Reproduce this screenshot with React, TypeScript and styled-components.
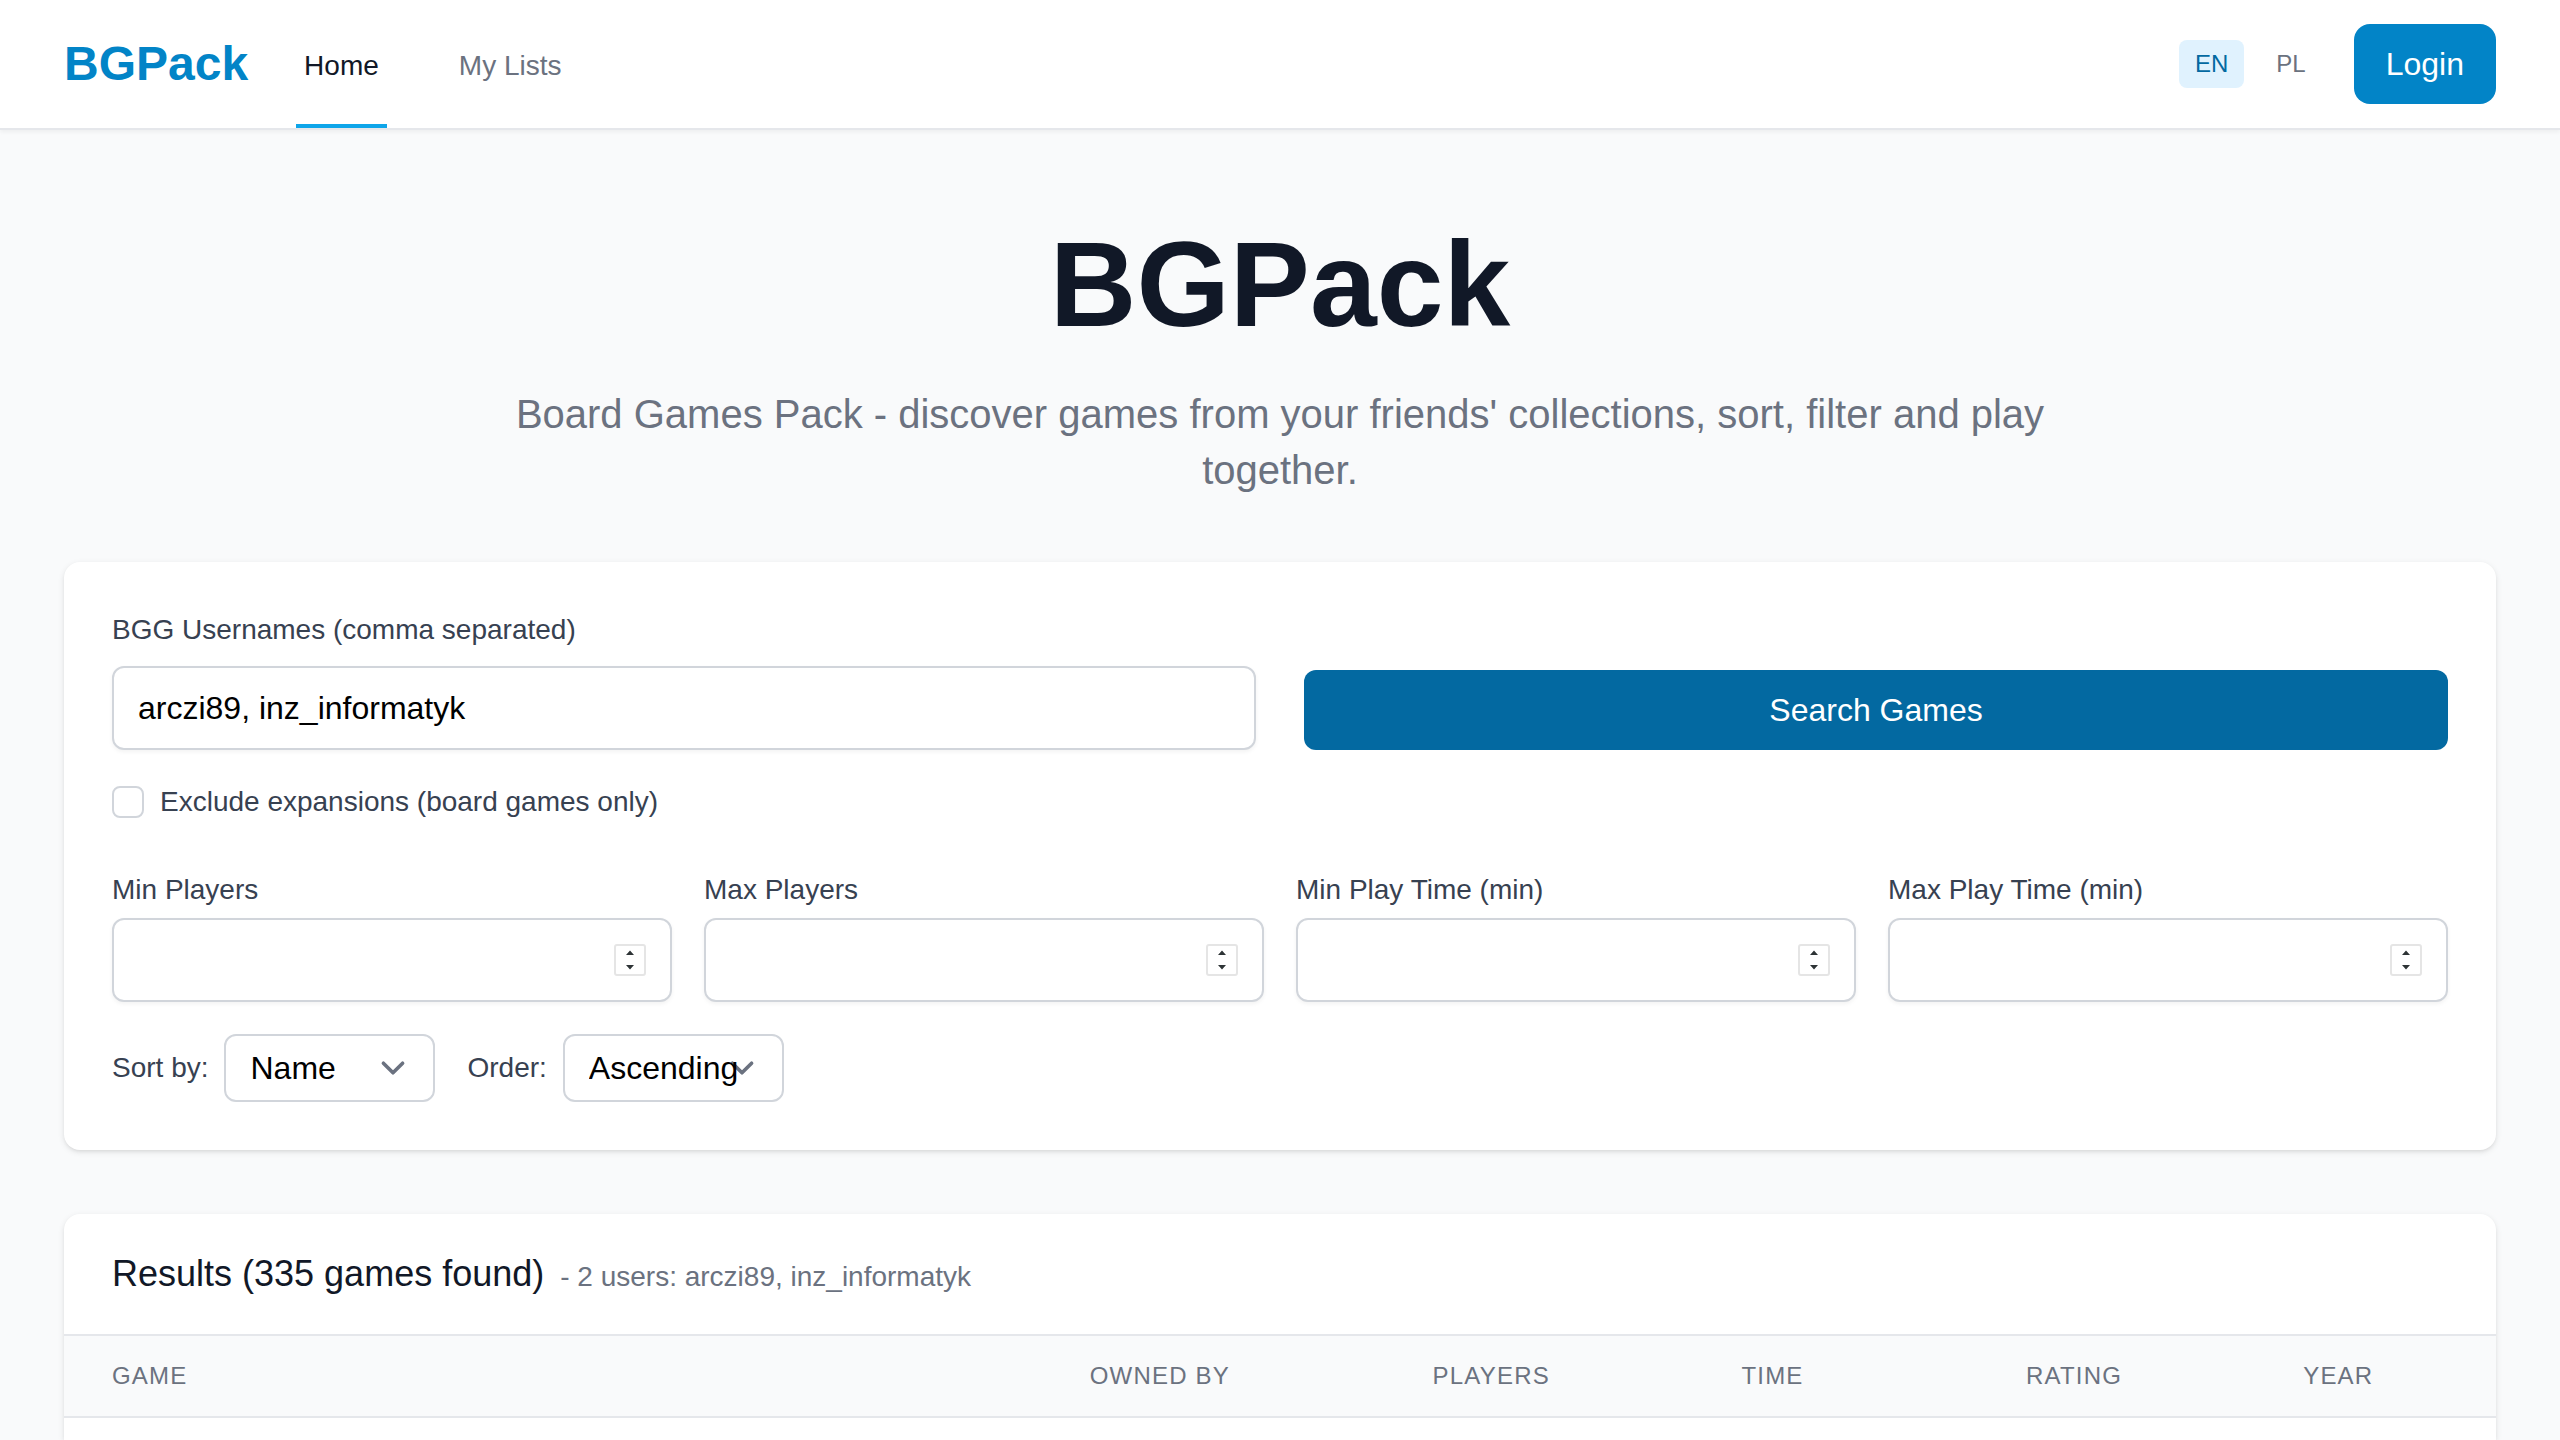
import React, { useState } from "react";
import styled, { createGlobalStyle } from "styled-components";

const sky = { 500: "#0ea5e9", 600: "#0284c7", 700: "#0369a1", 100: "#e0f2fe" };
const gray = {
  50: "#f9fafb",
  200: "#e5e7eb",
  300: "#d1d5db",
  500: "#6b7280",
  700: "#374151",
  900: "#111827",
};
const cardShadow =
  "0 2px 6px rgba(0, 0, 0, 0.1), 0 2px 4px -2px rgba(0, 0, 0, 0.1)";
const fieldShadow = "0 2px 4px rgba(0, 0, 0, 0.05)";

const svgUrl = (body: string) => `url("data:image/svg+xml,${encodeURIComponent(body)}")`;

const chevron = svgUrl(
  `<svg xmlns="http://www.w3.org/2000/svg" fill="none" viewBox="0 0 20 20"><path stroke="#6b7280" stroke-linecap="round" stroke-linejoin="round" stroke-width="1.5" d="M6 8l4 4 4-4"/></svg>`
);
const stepper = svgUrl(
  `<svg xmlns="http://www.w3.org/2000/svg" width="32" height="32" viewBox="0 0 32 32"><rect x="1" y="1" width="30" height="30" rx="2" fill="#fff" stroke="#e5e5e5" stroke-width="2"/><path fill="#2e3436" d="M16 6.5l4 4.5h-8zM16 25.5l4-4.5h-8z"/></svg>`
);

const GlobalStyle = createGlobalStyle`
  *, *::before, *::after { box-sizing: border-box; }
  body {
    margin: 0;
    background: ${gray[50]};
    color: ${gray[900]};
    font-family: "Liberation Sans", Arial, sans-serif;
    font-size: 32px;
    line-height: 48px;
  }
  button, input, select { font: inherit; margin: 0; }
`;

const Page = styled.div`
  display: flex;
  flex-direction: column;
  min-height: 100vh;
`;

const Header = styled.header`
  display: flex;
  align-items: center;
  justify-content: space-between;
  padding: 0 64px;
  background: #fff;
  border-bottom: 2px solid ${gray[200]};
  box-shadow: ${fieldShadow};
`;

const HeaderSide = styled.div<{ $gap: number }>`
  display: flex;
  align-items: center;
  gap: ${(p) => p.$gap}px;
`;

const Brand = styled.a`
  color: ${sky[600]};
  font-size: 48px;
  line-height: 64px;
  font-weight: 700;
  text-decoration: none;
`;

const Nav = styled.nav`
  display: flex;
  gap: 64px;
  height: 128px;
`;

const NavLink = styled.a<{ $active?: boolean }>`
  display: inline-flex;
  align-items: center;
  padding: 8px 8px 0;
  border-bottom: 4px solid ${(p) => (p.$active ? sky[500] : "transparent")};
  color: ${(p) => (p.$active ? gray[900] : gray[500])};
  font-size: 28px;
  line-height: 40px;
  text-decoration: none;
`;

const Languages = styled.div`
  display: flex;
  gap: 16px;
`;

const LanguageButton = styled.button<{ $active: boolean }>`
  padding: 8px 16px;
  border: 0;
  border-radius: 8px;
  background: ${(p) => (p.$active ? sky[100] : "transparent")};
  color: ${(p) => (p.$active ? sky[700] : gray[500])};
  font-size: 24px;
  line-height: 32px;
  cursor: pointer;
`;

const LoginButton = styled.button`
  padding: 16px 32px;
  border: 0;
  border-radius: 16px;
  background: ${sky[600]};
  color: #fff;
  cursor: pointer;
`;

const Main = styled.main`
  display: flex;
  flex: 1;
  flex-direction: column;
  gap: 64px;
  padding: 96px 64px 0;
`;

const Hero = styled.section`
  text-align: center;
`;

const Title = styled.h1`
  margin: 0;
  font-size: 120px;
  line-height: 116px;
  font-weight: 700;
`;

const Subtitle = styled.p`
  max-width: 1536px;
  margin: 44px auto 0;
  color: ${gray[500]};
  font-size: 40px;
  line-height: 56px;
`;

const SearchCard = styled.form`
  padding: 48px;
  border-radius: 16px;
  background: #fff;
  box-shadow: ${cardShadow};
`;

const SearchRow = styled.div`
  display: grid;
  grid-template-columns: repeat(2, minmax(0, 1fr));
  gap: 48px;
  align-items: end;
`;

const Field = styled.div<{ $gap: number }>`
  display: flex;
  flex-direction: column;
  gap: ${(p) => p.$gap}px;
`;

const Label = styled.label`
  color: ${gray[700]};
  font-size: 28px;
  line-height: 40px;
`;

const TextInput = styled.input`
  width: 100%;
  height: 84px;
  padding: 16px 24px;
  border: 2px solid ${gray[300]};
  border-radius: 12px;
  background: #fff;
  box-shadow: ${fieldShadow};
  color: #000;

  &::-webkit-inner-spin-button {
    appearance: none;
    width: 32px;
    height: 48px;
    background: ${stepper} center / 32px 32px no-repeat;
    opacity: 1;
    cursor: default;
  }
`;

const SearchButton = styled.button`
  padding: 16px 32px;
  border: 0;
  border-radius: 12px;
  background: ${sky[700]};
  color: #fff;
  cursor: pointer;
`;

const CheckRow = styled.div`
  display: flex;
  align-items: center;
  gap: 16px;
  margin-top: 32px;
`;

const Checkbox = styled.input`
  appearance: none;
  width: 32px;
  height: 32px;
  border: 2px solid ${gray[300]};
  border-radius: 8px;
  background: #fff;

  &:checked {
    border-color: ${sky[600]};
    background: ${sky[600]};
  }
`;

const FilterGrid = styled.div`
  display: grid;
  grid-template-columns: repeat(4, minmax(0, 1fr));
  gap: 32px;
  margin-top: 48px;
`;

const SortRow = styled.div`
  display: flex;
  flex-wrap: wrap;
  gap: 32px;
  margin-top: 32px;
`;

const SortField = styled.div`
  display: flex;
  align-items: center;
  gap: 16px;
`;

const Select = styled.select`
  appearance: none;
  padding: 8px 24px;
  border: 2px solid ${gray[300]};
  border-radius: 12px;
  background: #fff ${chevron} right 16px center / 48px 48px no-repeat;
  color: #000;
  line-height: 48px;
`;

const ResultsCard = styled.section`
  flex: 1;
  border-radius: 16px 16px 0 0;
  background: #fff;
  box-shadow: ${cardShadow};
`;

const ResultsHeading = styled.h2`
  margin: 0;
  padding: 32px 48px;
  border-bottom: 2px solid ${gray[200]};
  font-size: 36px;
  line-height: 56px;
  font-weight: 400;
`;

const ResultsUsers = styled.span`
  margin-left: 16px;
  color: ${gray[500]};
  font-size: 28px;
  line-height: 40px;
`;

const Table = styled.table`
  width: 100%;
  border-collapse: separate;
  border-spacing: 0;
  table-layout: fixed;
`;

const HeadCell = styled.th<{ $width: string }>`
  width: ${(p) => p.$width};
  padding: 24px 48px;
  border-bottom: 2px solid ${gray[200]};
  background: ${gray[50]};
  color: ${gray[500]};
  font-size: 24px;
  line-height: 32px;
  font-weight: 400;
  letter-spacing: 0.05em;
  text-align: left;
  text-transform: uppercase;
  white-space: nowrap;
`;

const filters = [
  { id: "min-players", label: "Min Players" },
  { id: "max-players", label: "Max Players" },
  { id: "min-time", label: "Min Play Time (min)" },
  { id: "max-time", label: "Max Play Time (min)" },
];

const columns = [
  { label: "Game", width: "40.2%" },
  { label: "Owned by", width: "14.1%" },
  { label: "Players", width: "12.7%" },
  { label: "Time", width: "11.7%" },
  { label: "Rating", width: "11.4%" },
  { label: "Year", width: "9.9%" },
];

export default function App() {
  const [language, setLanguage] = useState("EN");
  const [usernames, setUsernames] = useState("arczi89, inz_informatyk");

  return (
    <>
      <GlobalStyle />
      <Page>
        <Header>
          <HeaderSide $gap={48}>
            <Brand href="#">BGPack</Brand>
            <Nav>
              <NavLink href="#" $active aria-current="page">
                Home
              </NavLink>
              <NavLink href="#lists">My Lists</NavLink>
            </Nav>
          </HeaderSide>
          <HeaderSide $gap={32}>
            <Languages>
              {["EN", "PL"].map((code) => (
                <LanguageButton
                  key={code}
                  type="button"
                  $active={language === code}
                  onClick={() => setLanguage(code)}
                >
                  {code}
                </LanguageButton>
              ))}
            </Languages>
            <LoginButton type="button">Login</LoginButton>
          </HeaderSide>
        </Header>
        <Main>
          <Hero>
            <Title>BGPack</Title>
            <Subtitle>
              Board Games Pack - discover games from your friends' collections, sort, filter and
              play together.
            </Subtitle>
          </Hero>
          <SearchCard onSubmit={(e) => e.preventDefault()}>
            <SearchRow>
              <Field $gap={16}>
                <Label htmlFor="usernames">BGG Usernames (comma separated)</Label>
                <TextInput
                  id="usernames"
                  type="text"
                  spellCheck={false}
                  value={usernames}
                  onChange={(e) => setUsernames(e.target.value)}
                />
              </Field>
              <SearchButton type="submit">Search Games</SearchButton>
            </SearchRow>
            <CheckRow>
              <Checkbox id="exclude" type="checkbox" />
              <Label htmlFor="exclude">Exclude expansions (board games only)</Label>
            </CheckRow>
            <FilterGrid>
              {filters.map((f) => (
                <Field key={f.id} $gap={8}>
                  <Label htmlFor={f.id}>{f.label}</Label>
                  <TextInput id={f.id} type="number" min={0} />
                </Field>
              ))}
            </FilterGrid>
            <SortRow>
              <SortField>
                <Label htmlFor="sort">Sort by:</Label>
                <Select id="sort" defaultValue="name">
                  <option value="name">Name</option>
                  <option value="rating">Rating</option>
                  <option value="complexity">Complexity</option>
                  <option value="year">Year</option>
                </Select>
              </SortField>
              <SortField>
                <Label htmlFor="order">Order:</Label>
                <Select id="order" defaultValue="asc">
                  <option value="asc">Ascending</option>
                  <option value="desc">Descending</option>
                </Select>
              </SortField>
            </SortRow>
          </SearchCard>
          <ResultsCard>
            <ResultsHeading>
              Results (335 games found)
              <ResultsUsers>- 2 users: arczi89, inz_informatyk</ResultsUsers>
            </ResultsHeading>
            <Table>
              <thead>
                <tr>
                  {columns.map((c) => (
                    <HeadCell key={c.label} scope="col" $width={c.width}>
                      {c.label}
                    </HeadCell>
                  ))}
                </tr>
              </thead>
            </Table>
          </ResultsCard>
        </Main>
      </Page>
    </>
  );
}
